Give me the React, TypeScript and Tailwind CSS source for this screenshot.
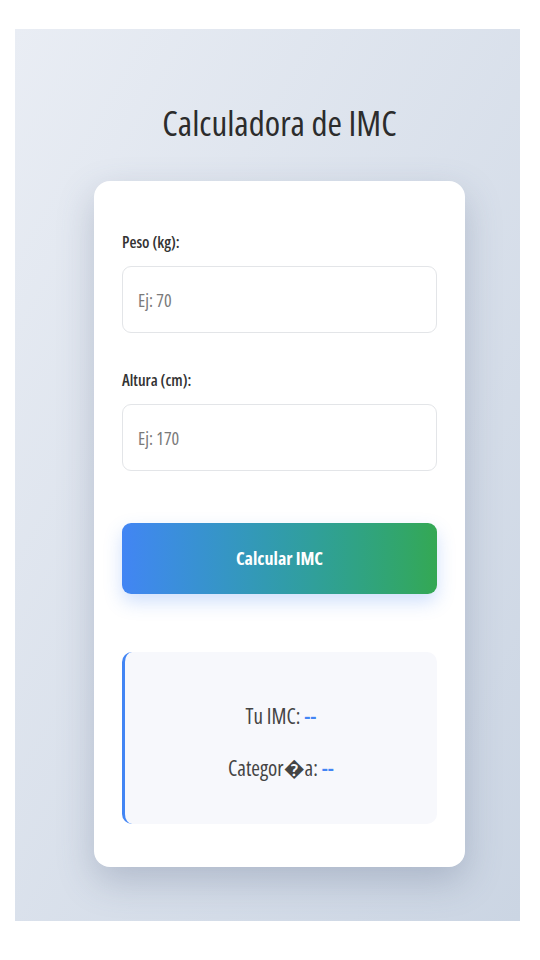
export default function App() {
  const font = { fontFamily: '"Open Sans", "Noto Sans", "DejaVu Sans Condensed", sans-serif', fontStretch: '75%' };

  return (
    <div className="min-h-[960px] bg-white pt-[29px] pl-[15px] pr-[20px]" style={font}>
      <div className="h-[892px] bg-gradient-to-br from-[#e9edf4] to-[#cbd5e3] pl-[79px] pr-[55px] pt-[71px]">
        {/* Title */}
        <h1 className="text-center text-[35px] leading-[46px] text-[#2c2c2c] font-normal">Calculadora de IMC</h1>

        {/* Card */}
        <div className="mt-[35px] bg-white rounded-[16px] shadow-[0_14px_36px_rgba(80,95,125,0.28)] px-[28px] pt-[50px] pb-[43px]">
          <label className="block text-[16px] leading-[22px] font-semibold text-[#333]">Peso (kg):</label>
          <input
            type="text"
            placeholder="Ej: 70"
            className="mt-[13px] block w-full h-[67px] rounded-[9px] border border-[#e3e5e8] px-[15px] text-[18px] placeholder:text-[#7a7a7a] outline-none"
            style={font}
          />

          <label className="mt-[36px] block text-[16px] leading-[22px] font-semibold text-[#333]">Altura (cm):</label>
          <input
            type="text"
            placeholder="Ej: 170"
            className="mt-[13px] block w-full h-[67px] rounded-[9px] border border-[#e3e5e8] px-[15px] text-[18px] placeholder:text-[#7a7a7a] outline-none"
            style={font}
          />

          <button
            className="mt-[52px] block w-full h-[71px] rounded-[9px] bg-gradient-to-r from-[#4285f4] to-[#34a853] text-white text-[18px] font-bold shadow-[0_8px_18px_rgba(66,133,244,0.25)]"
            style={font}
          >
            Calcular IMC
          </button>

          {/* Result */}
          <div className="mt-[58px] h-[172px] rounded-[10px] bg-[#f7f8fc] border-l-[3px] border-[#4285f4] flex flex-col items-center justify-center gap-[20px] pt-[9px] text-[21px] text-[#444]">
            <p>
              Tu IMC: <span className="text-[#4285f4] font-semibold">--</span>
            </p>
            <p>
              Categor{'\uFFFD'}a: <span className="text-[#4285f4] font-semibold">--</span>
            </p>
          </div>
        </div>
      </div>
    </div>
  );
}
